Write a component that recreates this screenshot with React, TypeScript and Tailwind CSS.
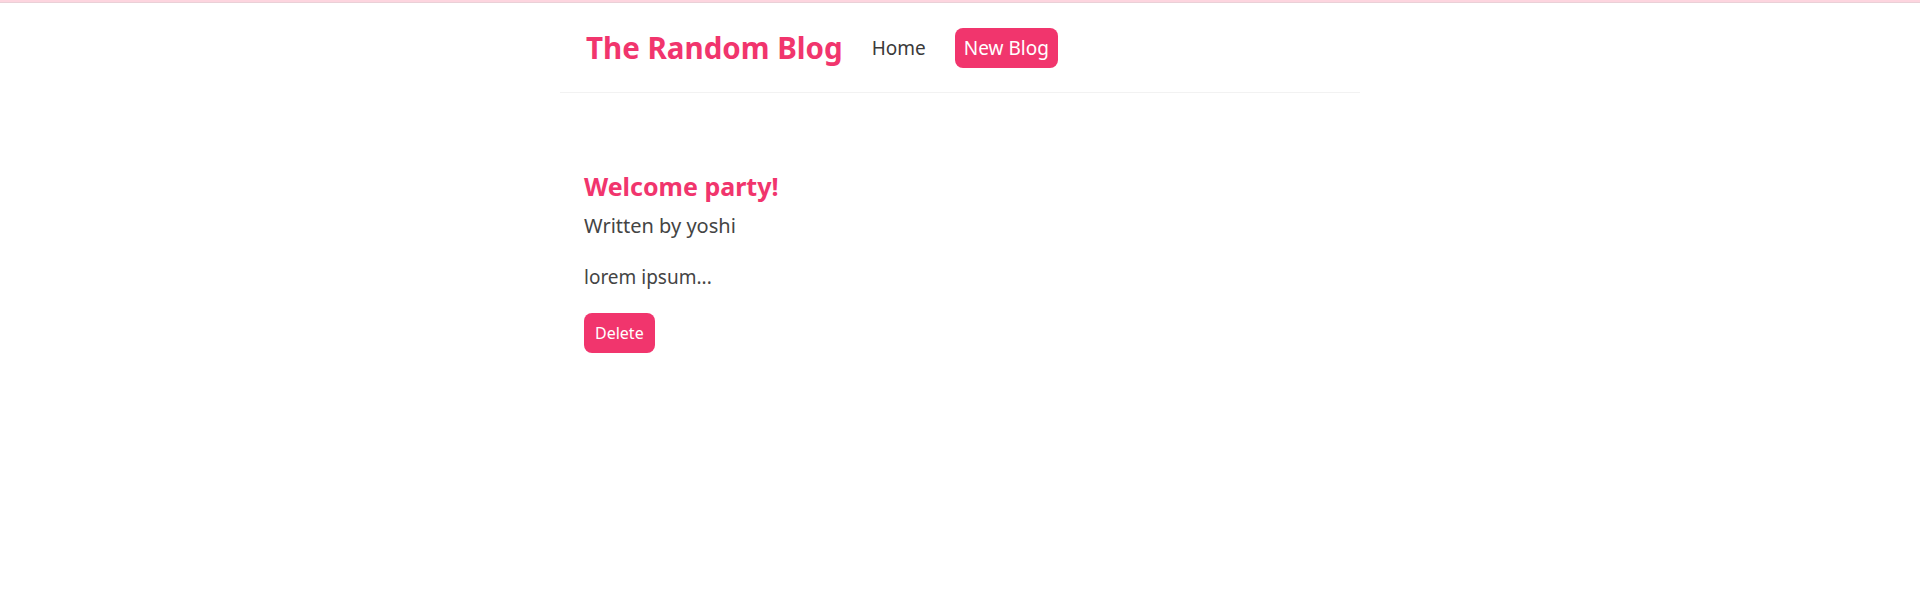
export default function App() {
  const font = { fontFamily: "'Noto Sans', 'Open Sans', sans-serif" };
  return (
    <div className="min-h-[612px] bg-white text-[#333]" style={font}>
      <div className="h-[2px] bg-[#fdd5df]" />
      <div className="h-px bg-[#ead0d7]" />
      <nav className="mx-auto flex h-[90px] max-w-[800px] items-center gap-[29px] border-b border-[#f2f2f2] pl-[26px] pr-6">
        <h1 className="text-[29.5px] font-bold leading-[40px] text-[#f1356d]">The Random Blog</h1>
        <a className="text-[19px] leading-[28px] text-[#3a3a3a]">Home</a>
        <a className="flex h-[40px] items-center rounded-lg bg-[#f1356d] px-[9px] text-[19px] leading-[28px] text-white">New Blog</a>
      </nav>
      <div className="mx-auto max-w-[800px] px-6 pt-[77px]">
        <h2 className="text-[25px] font-bold leading-[32px] text-[#f1356d]">Welcome party!</h2>
        <p className="mt-[10px] text-[20px] leading-[28px] text-[#444]">Written by yoshi</p>
        <p className="mt-[23px] text-[19px] leading-[28px] text-[#444]">lorem ipsum...</p>
        <button className="mt-[22px] h-[40px] rounded-lg bg-[#f1356d] px-[11px] text-[16px] leading-[22px] text-white">Delete</button>
      </div>
    </div>
  );
}
